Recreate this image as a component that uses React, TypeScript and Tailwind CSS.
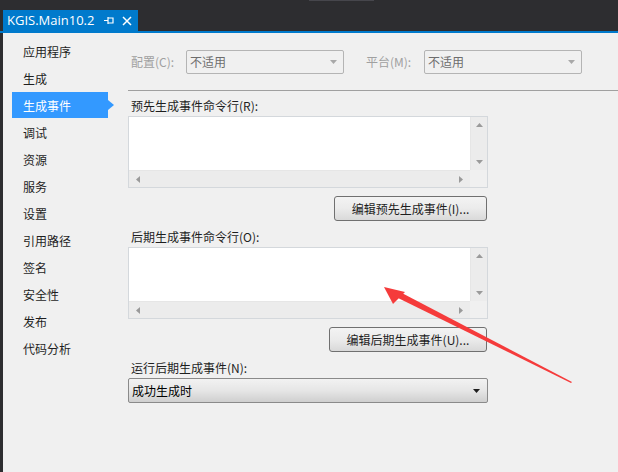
import React from 'react';

const navItems = ['应用程序', '生成', '生成事件', '调试', '资源', '服务', '设置', '引用路径', '签名', '安全性', '发布', '代码分析'];

function Tri({ dir, color = '#9a9a9a' }: { dir: 'up' | 'down' | 'left' | 'right'; color?: string }) {
  const pts = {
    up: '0,4 3.5,0 7,4',
    down: '0,0 7,0 3.5,4',
    left: '4,0 4,7 0,3.5',
    right: '0,0 0,7 4,3.5',
  }[dir];
  const vertical = dir === 'up' || dir === 'down';
  return (
    <svg width={vertical ? 7 : 4} height={vertical ? 4 : 7} viewBox={vertical ? '0 0 7 4' : '0 0 4 7'}>
      <polygon points={pts} fill={color} />
    </svg>
  );
}

function CommandBox() {
  return (
    <div className="flex h-[72px] w-[360px] flex-col border border-[#d4d8dc] bg-[#f0f0f0]">
      <div className="flex flex-1">
        <div className="flex-1 bg-white" />
        <div className="flex w-[17px] flex-col items-center justify-between border-l border-[#e6e6e6] bg-[#ececec] py-[6px]">
          <Tri dir="up" />
          <Tri dir="down" />
        </div>
      </div>
      <div className="flex h-[17px]">
        <div className="flex flex-1 items-center justify-between border-t border-[#e6e6e6] bg-[#ececec] px-[7px]">
          <Tri dir="left" />
          <Tri dir="right" />
        </div>
        <div className="w-[17px] bg-[#f0f0f0]" />
      </div>
    </div>
  );
}

function Combo({ width, text }: { width: string; text: string }) {
  return (
    <div className={`flex h-[24px] items-center justify-between rounded-[2px] border border-[#b4b4b4] bg-[#f0f0f0] pl-[3px] pr-[6px] ${width}`}>
      <span className="text-[#6d6d6d]">{text}</span>
      <Tri dir="down" color="#a8a8a8" />
    </div>
  );
}

function Button({ width, label }: { width: string; label: string }) {
  return (
    <div
      className={`flex h-[25px] items-center justify-center rounded-[3px] border border-[#707070] bg-gradient-to-b from-[#f3f3f3] via-[#ebebeb] to-[#d9d9d9] text-[#1e1e1e] ${width}`}
    >
      {label}
    </div>
  );
}

export default function App() {
  return (
    <div
      className="relative h-[472px] w-[618px] overflow-hidden bg-[#2d2d30] text-[12px]"
      style={{ fontFamily: '"Noto Sans CJK SC", "Liberation Sans", sans-serif' }}
    >
      {/* tab strip */}
      <div className="relative h-[31px] pl-[3px] pt-[10px]">
        <div className="absolute left-[309px] top-0 h-px w-[65px] bg-[#46464c]" />
        <div className="flex h-[21px] w-[135px] items-center bg-[#007acc] pl-[4px] text-white">
          <span className="w-[97px] text-[13px] leading-none" style={{ fontFamily: '"Open Sans", "Liberation Sans", sans-serif' }}>
            KGIS.Main10.2
          </span>
          <svg width="10" height="9" viewBox="0 0 10 9">
            <path d="M0 4.5H4M4 1V8M4 2H9V7H4" stroke="white" strokeWidth="1.2" fill="none" />
          </svg>
          <svg className="ml-[8px]" width="10" height="10" viewBox="0 0 10 10">
            <path d="M1 1L9 9M9 1L1 9" stroke="white" strokeWidth="1.5" />
          </svg>
        </div>
      </div>
      <div className="h-[2px] bg-[#007acc]" />

      <div className="ml-[3px] flex h-[439px] bg-[#f0f0f0]">
        {/* sidebar */}
        <div className="w-[125px] pt-[5px]">
          {navItems.map((item) => {
            const active = item === '生成事件';
            return (
              <div key={item} className="relative ml-[9px] flex h-[27px] w-[96px] items-center">
                {active && (
                  <>
                    <div className="absolute inset-x-0 top-0 h-[26px] bg-[#3399ff]" />
                    <svg className="absolute left-[96px] top-[8px]" width="6" height="10" viewBox="0 0 6 10">
                      <polygon points="0,0 6,5 0,10" fill="#3399ff" />
                    </svg>
                  </>
                )}
                <span className={`relative pl-[11px] ${active ? 'text-white' : 'text-[#1e1e1e]'}`}>{item}</span>
              </div>
            );
          })}
        </div>

        {/* main */}
        <div className="flex-1 pt-[17px]">
          <div className="flex h-[24px] items-center">
            <span className="w-[58px] pl-[3px] text-[#a0a0a0]">配置(C):</span>
            <Combo width="w-[158px]" text="不适用" />
            <span className="ml-[22px] w-[58px] text-[#a0a0a0]">平台(M):</span>
            <Combo width="w-[158px]" text="不适用" />
          </div>

          <div className="mt-[16px] h-px bg-[#a0a0a0]" />

          <div className="w-[360px]">
            <div className="mt-[5px] h-[20px] pl-[3px] leading-[20px] text-[#1e1e1e]">预先生成事件命令行(R):</div>
            <CommandBox />
            <div className="mt-[8px] flex justify-end pr-[1px]">
              <Button width="w-[153px]" label="编辑预先生成事件(I)..." />
            </div>

            <div className="mt-[6px] h-[20px] pl-[3px] leading-[20px] text-[#1e1e1e]">后期生成事件命令行(O):</div>
            <CommandBox />
            <div className="mt-[8px] flex justify-end pr-[1px]">
              <Button width="w-[158px]" label="编辑后期生成事件(U)..." />
            </div>

            <div className="mt-[6px] h-[20px] pl-[3px] leading-[20px] text-[#1e1e1e]">运行后期生成事件(N):</div>
            <div className="flex h-[25px] items-center justify-between rounded-[2px] border border-[#8a8a8a] bg-gradient-to-b from-[#f2f2f2] via-[#e6e6e6] to-[#cfcfcf] pl-[3px] pr-[7px] text-black">
              <span>成功生成时</span>
              <Tri dir="down" color="#1e1e1e" />
            </div>
          </div>
        </div>
      </div>

      {/* annotation arrow */}
      <svg className="pointer-events-none absolute left-0 top-0" width="618" height="472" viewBox="0 0 618 472">
        <polygon points="572,382 398,291 396,297 571,383" fill="#f53b3b" />
        <polygon points="384,287 405,292 393,304" fill="#f53b3b" />
      </svg>
    </div>
  );
}
